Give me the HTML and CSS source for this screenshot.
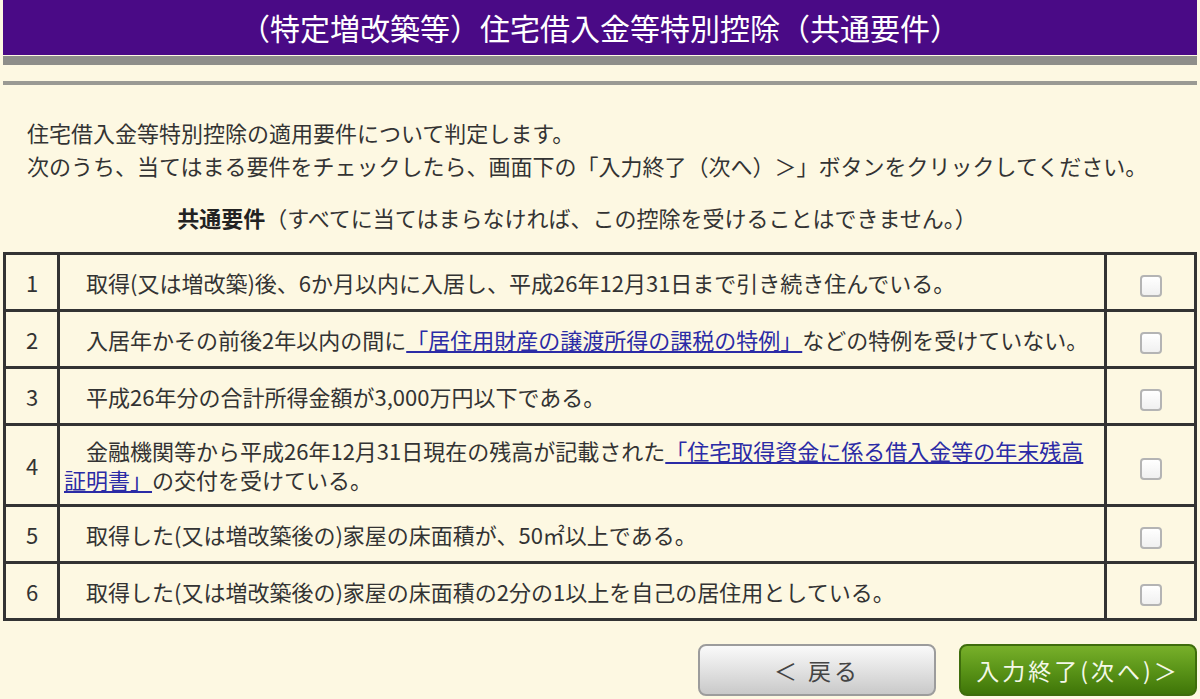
FILE: index.html
```html
<!DOCTYPE html>
<html lang="ja">
<head>
    <meta charset="UTF-8">
    <title>住宅借入金等特別控除（共通要件）</title>
    <link rel="stylesheet" href="styles.css">
</head>
<body>
<div class="page">
    <h1 class="title">（特定増改築等）住宅借入金等特別控除（共通要件）</h1>
    <div class="title-rule"></div>
    <div class="sub-rule"></div>

    <div class="intro">
        <p>住宅借入金等特別控除の適用要件について判定します。</p>
        <p>次のうち、当てはまる要件をチェックしたら、画面下の「入力終了（次へ）＞」ボタンをクリックしてください。</p>
        <p class="caption"><b>共通要件</b>（すべてに当てはまらなければ、この控除を受けることはできません。）</p>
    </div>

    <table class="req">
        <tr>
            <td class="no">1</td>
            <td class="txt">　取得(又は増改築)後、6か月以内に入居し、平成26年12月31日まで引き続き住んでいる。</td>
            <td class="chk"><input type="checkbox"></td>
        </tr>
        <tr>
            <td class="no">2</td>
            <td class="txt">　入居年かその前後2年以内の間に<a href="#">「居住用財産の譲渡所得の課税の特例」</a>などの特例を受けていない。</td>
            <td class="chk"><input type="checkbox"></td>
        </tr>
        <tr>
            <td class="no">3</td>
            <td class="txt">　平成26年分の合計所得金額が3,000万円以下である。</td>
            <td class="chk"><input type="checkbox"></td>
        </tr>
        <tr class="tall">
            <td class="no">4</td>
            <td class="txt">　金融機関等から平成26年12月31日現在の残高が記載された<a href="#">「住宅取得資金に係る借入金等の年末残高証明書」</a>の交付を受けている。</td>
            <td class="chk"><input type="checkbox"></td>
        </tr>
        <tr>
            <td class="no">5</td>
            <td class="txt">　取得した(又は増改築後の)家屋の床面積が、50㎡以上である。</td>
            <td class="chk"><input type="checkbox"></td>
        </tr>
        <tr>
            <td class="no">6</td>
            <td class="txt">　取得した(又は増改築後の)家屋の床面積の2分の1以上を自己の居住用としている。</td>
            <td class="chk"><input type="checkbox"></td>
        </tr>
    </table>

    <div class="nav">
        <button class="btn back">＜ 戻る</button>
        <button class="btn next">入力終了(次へ)＞</button>
    </div>
</div>
</body>
</html>
```

FILE: styles.css
```css
html, body {
    margin: 0;
    padding: 0;
}

body {
    background: #fdf8e2;
    color: #333;
    font-family: "Noto Sans CJK JP", "Noto Sans", sans-serif;
    font-size: 22px;
}

.page {
    padding: 0 3px;
}

/* 紫のタイトルバー */
.title {
    margin: 0;
    height: 55px;
    line-height: 55px;
    background: #4a0a86;
    color: #fff;
    font-size: 30px;
    font-weight: normal;
    text-align: center;
}

.title-rule {
    height: 9px;
    margin-top: 1px;
    background: #8e8e8a;
}

.sub-rule {
    height: 4px;
    margin-top: 16px;
    background: #9a9a94;
}

.intro {
    padding: 31px 0 0 24px;
}

.intro p {
    margin: 0;
    line-height: 33px;
}

.intro .caption {
    margin: 19px 0 18px;
    padding-right: 70px;
    text-align: center;
}

.intro .caption b {
    color: #222;
}

/* 要件一覧 */
.req {
    width: 100%;
    border-collapse: collapse;
    border: 3px solid #333;
}

.req td {
    border: 3px solid #333;
    height: 54px;
    padding: 0 3px 0 4px;
    line-height: 29px;
}

.req .tall td {
    height: 78px;
}

.req .no {
    width: 44px;
    text-align: center;
}

.req .chk {
    width: 80px;
    text-align: center;
}

.req a {
    color: #2b2ba6;
    text-decoration: underline;
}

.req input {
    -webkit-appearance: none;
    appearance: none;
    width: 22px;
    height: 22px;
    margin: 0;
    vertical-align: middle;
    border: 2px solid #b4b4b4;
    border-radius: 4px;
    background: linear-gradient(#fff, #f0f0f0);
}

/* 戻る・次へ */
.nav {
    display: flex;
    justify-content: flex-end;
    gap: 23px;
    margin-top: 23px;
}

.btn {
    width: 238px;
    height: 52px;
    border-radius: 8px;
    font-family: inherit;
    font-size: 23px;
    letter-spacing: 3px;
    cursor: pointer;
}

.back {
    border: 2px solid #9c9c9c;
    background: linear-gradient(#fafafa, #e2e2e2 50%, #c9c9c9);
    color: #444;
}

.next {
    border: 2px solid #3e6d0c;
    background: linear-gradient(#78b02a, #5a9418 50%, #3f7508);
    color: #f4f8e8;
}
```
